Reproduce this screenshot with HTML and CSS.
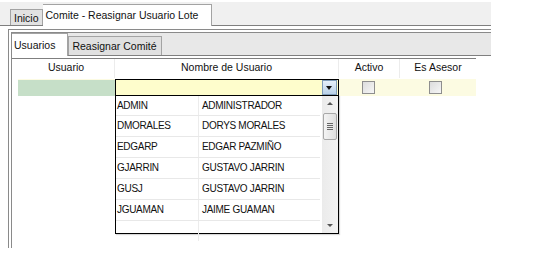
FILE: index.html
```html
<!DOCTYPE html>
<html lang="es">
<head>
  <meta charset="UTF-8">
  <title>Comite - Reasignar Usuario Lote</title>
  <link rel="stylesheet" href="styles.css">
</head>
<body>
  <div class="app">
    <div class="top-tabs">
      <div class="tab">Inicio</div>
      <div class="tab active">Comite - Reasignar Usuario Lote</div>
    </div>

    <div class="frame">
      <div class="inner-tabs">
        <div class="itab active">Usuarios</div>
        <div class="itab">Reasignar Comité</div>
      </div>

      <div class="grid">
        <div class="grid-row header">
          <div class="cell">Usuario</div>
          <div class="cell">Nombre de Usuario</div>
          <div class="cell">Activo</div>
          <div class="cell">Es Asesor</div>
        </div>
        <div class="grid-row current">
          <div class="cell user-cell"></div>
          <div class="cell combo-cell">
            <div class="combo">
              <span class="combo-btn"></span>
            </div>
          </div>
          <div class="cell"><span class="check"></span></div>
          <div class="cell"><span class="check"></span></div>
        </div>
      </div>

      <div class="dropdown">
        <div class="list">
          <div class="item"><span class="code">ADMIN</span><span class="name">ADMINISTRADOR</span></div>
          <div class="item"><span class="code">DMORALES</span><span class="name">DORYS MORALES</span></div>
          <div class="item"><span class="code">EDGARP</span><span class="name">EDGAR PAZMIÑO</span></div>
          <div class="item"><span class="code">GJARRIN</span><span class="name">GUSTAVO JARRIN</span></div>
          <div class="item"><span class="code">GUSJ</span><span class="name">GUSTAVO JARRIN</span></div>
          <div class="item"><span class="code">JGUAMAN</span><span class="name">JAIME GUAMAN</span></div>
          <div class="item empty"><span class="code"></span><span class="name"></span></div>
        </div>
        <div class="scrollbar">
          <span class="arrow up"></span>
          <span class="thumb"><i></i><i></i><i></i><i></i></span>
          <span class="arrow down"></span>
        </div>
      </div>
    </div>
  </div>
</body>
</html>
```

FILE: styles.css
```css
body {
  margin: 0;
  background: #fff;
  font-family: "Liberation Sans", Arial, sans-serif;
  font-size: 10.5px;
  color: #111;
}
.app {
  width: 491px;
}
.top-tabs {
  margin-top: 2px;
  height: 23px;
  background: #f0f0f0;
  border-bottom: 1px solid #7f7f7f;
  display: flex;
  align-items: flex-end;
  padding-left: 10px;
}
.tab {
  height: 15px;
  line-height: 16px;
  padding: 0 3px;
  background: #e2e2e2;
  border: 1px solid #a3a3a3;
  border-bottom: none;
}
.tab.active {
  height: 21px;
  line-height: 20px;
  padding: 0 13px 0 3px;
  background: #fff;
  border-left: none;
  margin-bottom: -1px;
}
.frame {
  margin: 3px 0 0 8px;
  height: 215px;
  border-top: 4px double #8a8a8a;
  border-left: 4px double #8a8a8a;
  position: relative;
}
.inner-tabs {
  height: 22px;
  background: #e8e8e8;
  border-bottom: 1px solid #7f7f7f;
  display: flex;
  align-items: flex-end;
}
.itab {
  height: 18px;
  line-height: 18px;
  padding: 0 5px 0 3px;
  background: #e0e0e0;
  border: 1px solid #a3a3a3;
  border-bottom: none;
}
.itab.active {
  height: 22px;
  line-height: 22px;
  padding: 0 12px 0 2px;
  background: #fff;
  border-left: none;
  margin-bottom: -1px;
}
.grid {
  margin-top: 2px;
  border-top: 1px solid #7f7f7f;
  padding-left: 6px;
  width: 458px;
}
.grid-row {
  display: grid;
  grid-template-columns: 97px 224px 61px 76px;
}
.header {
  height: 19px;
  line-height: 17px;
  text-align: center;
}
.header .cell {
  border-right: 1px solid #ececec;
}
.header .cell:last-child {
  border-right: none;
}
.current {
  height: 17px;
  margin-top: 1px;
  background: #fcfbe2;
}
.current .cell {
  display: flex;
  align-items: center;
  justify-content: center;
}
.user-cell {
  background: #c6dfc8;
  margin-top: 1px;
}
.combo-cell {
  align-items: stretch;
}
.combo {
  flex: 1;
  border: 1px solid #000;
  background: #fefdcc;
  display: flex;
  justify-content: flex-end;
  align-items: center;
  padding-right: 1px;
}
.combo-btn {
  width: 13px;
  height: 13px;
  border: 1px solid #7f9cb8;
  background: linear-gradient(#e6f0fa, #b9d1e8);
  position: relative;
}
.combo-btn::after {
  content: "";
  position: absolute;
  left: 3px;
  top: 5px;
  border-left: 3.5px solid transparent;
  border-right: 3.5px solid transparent;
  border-top: 4px solid #111;
}
.check {
  width: 11px;
  height: 11px;
  border: 1px solid #8e8e8e;
  background: linear-gradient(135deg, #dcdcdc, #f6f6f6);
  margin-left: -2px;
}
.current .cell:last-child .check {
  margin-left: -5px;
}
.dropdown {
  position: absolute;
  left: 103px;
  top: 62px;
  width: 222px;
  height: 137px;
  border: 1px solid #000;
  background: #fff;
  display: flex;
  box-shadow: 1px 1px 1px #d8d8d8;
}
.list {
  flex: 1;
}
.item {
  display: flex;
  height: 20px;
  line-height: 20px;
  border-bottom: 1px solid #e8e8e8;
  margin-right: 2px;
  font-size: 10px;
  letter-spacing: -0.3px;
}
.item:first-child {
  height: 19px;
}
.item.empty {
  border-bottom: none;
}
.code {
  width: 81px;
  padding-left: 1px;
  border-right: 1px solid #ececec;
}
.name {
  padding-left: 3px;
}
.scrollbar {
  width: 16px;
  background: linear-gradient(90deg, #ebebeb, #f2f2f2);
  position: relative;
}
.arrow {
  position: absolute;
  left: 5px;
  border-left: 3px solid transparent;
  border-right: 3px solid transparent;
}
.arrow.up {
  top: 6px;
  border-bottom: 3px solid #555;
}
.arrow.down {
  bottom: 6px;
  border-top: 3px solid #555;
}
.thumb {
  position: absolute;
  left: 1px;
  top: 17px;
  width: 12px;
  height: 25px;
  border: 1px solid #a8a8a8;
  border-radius: 2px;
  background: linear-gradient(90deg, #f4f4f4, #dedede);
  display: flex;
  flex-direction: column;
  align-items: center;
  justify-content: center;
  gap: 1px;
}
.thumb i {
  width: 6px;
  height: 1px;
  background: #666;
}
```
